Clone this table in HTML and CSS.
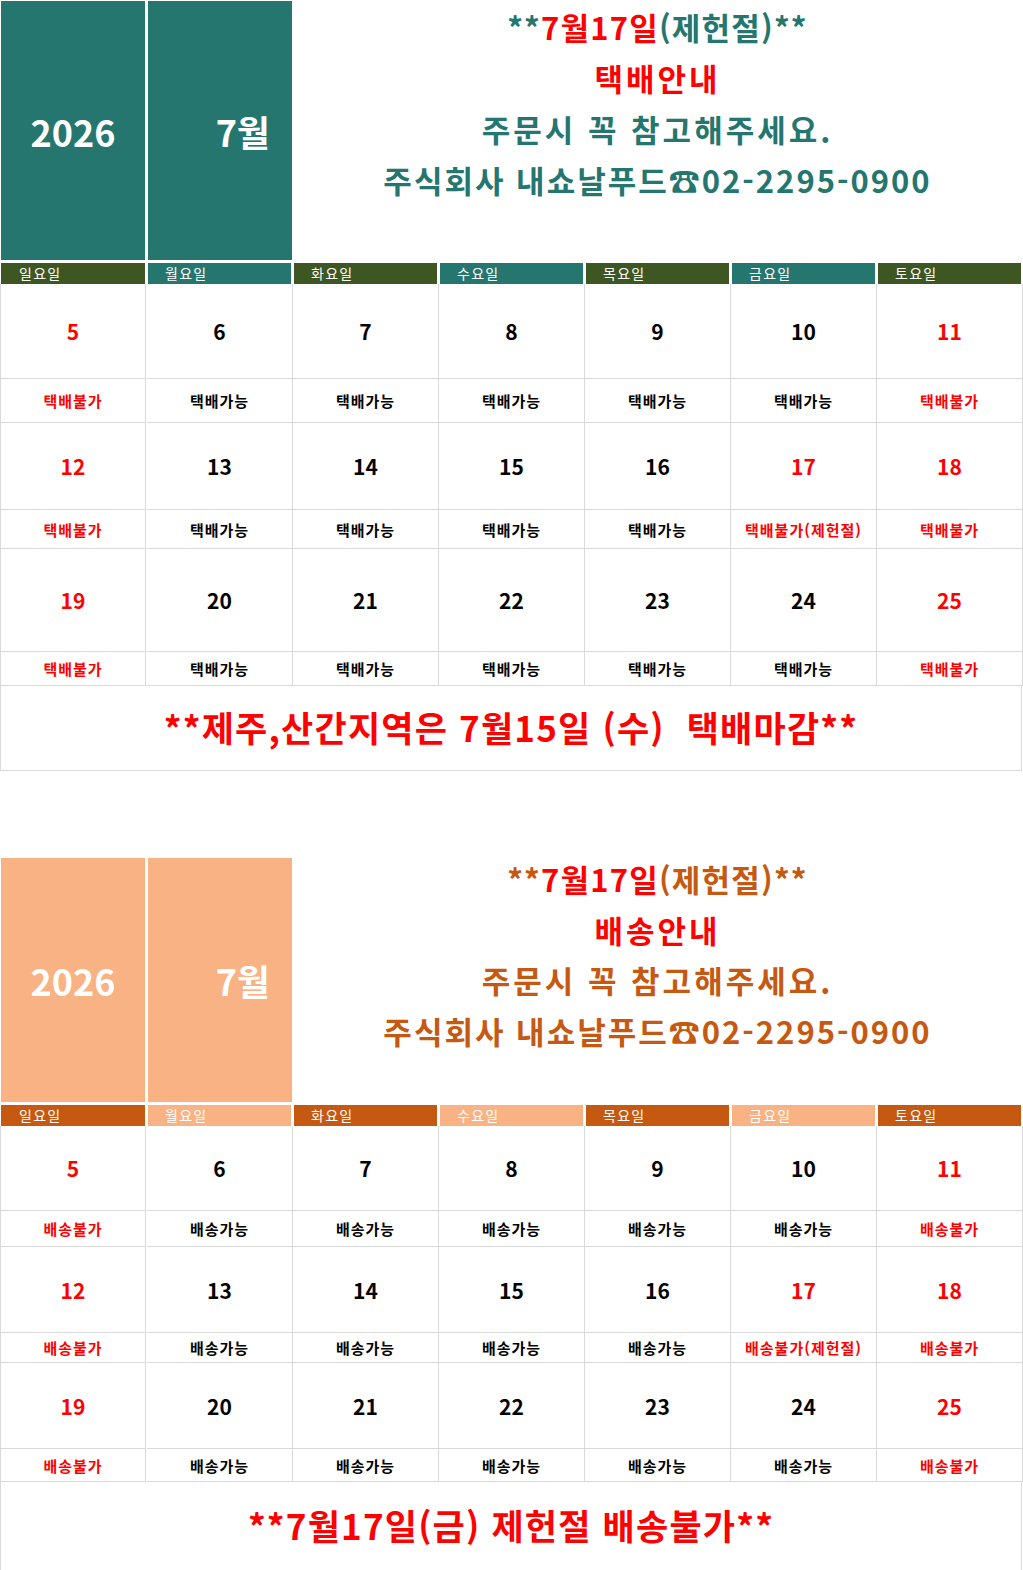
FILE: index.html
```html
<!DOCTYPE html>
<html lang="ko">
<head>
<meta charset="utf-8">
<title>7월 택배안내</title>
<link rel="stylesheet" href="styles.css">
</head>
<body>
<section class="cal cal-green">
  <div class="head">
    <div class="box year">2026</div>
    <div class="box month">7월</div>
    <div class="titles">
      <div class="tline t1">**<span class="red">7월17일</span>(제헌절)**</div>
      <div class="tline t2 red">택배안내</div>
      <div class="tline t3">주문시 꼭 참고해주세요.</div>
      <div class="tline t4">주식회사 내쇼날푸드☎02-2295-0900</div>
    </div>
  </div>
  <div class="dows">
    <div class="dow a">일요일</div><div class="dow b">월요일</div><div class="dow a">화요일</div><div class="dow b">수요일</div><div class="dow a">목요일</div><div class="dow b">금요일</div><div class="dow a">토요일</div>
  </div>
  <div class="grid">
    <div class="num red">5</div><div class="num">6</div><div class="num">7</div><div class="num">8</div><div class="num">9</div><div class="num">10</div><div class="num red">11</div>
    <div class="lab red">택배불가</div><div class="lab">택배가능</div><div class="lab">택배가능</div><div class="lab">택배가능</div><div class="lab">택배가능</div><div class="lab">택배가능</div><div class="lab red">택배불가</div>
    <div class="num red">12</div><div class="num">13</div><div class="num">14</div><div class="num">15</div><div class="num">16</div><div class="num red">17</div><div class="num red">18</div>
    <div class="lab red">택배불가</div><div class="lab">택배가능</div><div class="lab">택배가능</div><div class="lab">택배가능</div><div class="lab">택배가능</div><div class="lab red">택배불가(제헌절)</div><div class="lab red">택배불가</div>
    <div class="num red">19</div><div class="num">20</div><div class="num">21</div><div class="num">22</div><div class="num">23</div><div class="num">24</div><div class="num red">25</div>
    <div class="lab red">택배불가</div><div class="lab">택배가능</div><div class="lab">택배가능</div><div class="lab">택배가능</div><div class="lab">택배가능</div><div class="lab">택배가능</div><div class="lab red">택배불가</div>
  </div>
  <div class="notice">**제주,산간지역은 7월15일 (수)  택배마감**</div>
</section>

<section class="cal cal-orange">
  <div class="head">
    <div class="box year">2026</div>
    <div class="box month">7월</div>
    <div class="titles">
      <div class="tline t1">**<span class="red">7월17일</span>(제헌절)**</div>
      <div class="tline t2 red">배송안내</div>
      <div class="tline t3">주문시 꼭 참고해주세요.</div>
      <div class="tline t4">주식회사 내쇼날푸드☎02-2295-0900</div>
    </div>
  </div>
  <div class="dows">
    <div class="dow a">일요일</div><div class="dow b">월요일</div><div class="dow a">화요일</div><div class="dow b">수요일</div><div class="dow a">목요일</div><div class="dow b">금요일</div><div class="dow a">토요일</div>
  </div>
  <div class="grid">
    <div class="num red">5</div><div class="num">6</div><div class="num">7</div><div class="num">8</div><div class="num">9</div><div class="num">10</div><div class="num red">11</div>
    <div class="lab red">배송불가</div><div class="lab">배송가능</div><div class="lab">배송가능</div><div class="lab">배송가능</div><div class="lab">배송가능</div><div class="lab">배송가능</div><div class="lab red">배송불가</div>
    <div class="num red">12</div><div class="num">13</div><div class="num">14</div><div class="num">15</div><div class="num">16</div><div class="num red">17</div><div class="num red">18</div>
    <div class="lab red">배송불가</div><div class="lab">배송가능</div><div class="lab">배송가능</div><div class="lab">배송가능</div><div class="lab">배송가능</div><div class="lab red">배송불가(제헌절)</div><div class="lab red">배송불가</div>
    <div class="num red">19</div><div class="num">20</div><div class="num">21</div><div class="num">22</div><div class="num">23</div><div class="num">24</div><div class="num red">25</div>
    <div class="lab red">배송불가</div><div class="lab">배송가능</div><div class="lab">배송가능</div><div class="lab">배송가능</div><div class="lab">배송가능</div><div class="lab">배송가능</div><div class="lab red">배송불가</div>
  </div>
  <div class="notice">**7월17일(금) 제헌절 배송불가**</div>
</section>
</body>
</html>
```
FILE: styles.css
```css
* { box-sizing: border-box; }
html, body { margin: 0; padding: 0; background: #fff; }
body {
  font-family: "Noto Sans CJK KR", "Noto Sans", sans-serif;
  width: 1023px;
  overflow: hidden;
}
.red { color: #ff0000; }

.cal { width: 1023px; }
.cal-orange { margin-top: 87px; }

.head {
  display: grid;
  grid-template-columns: 146px 146px 1fr;
  padding-top: 1px;
}
.cal-green .head { height: 263px; }
.cal-orange .head { height: 247px; padding-top: 0; }

.box {
  color: #fff;
  font-weight: 700;
  font-size: 36px;
  display: flex;
  align-items: center;
  line-height: 1;
}
.cal-green .box { background: #25766f; height: 259px; }
.cal-orange .box { background: #f8b283; height: 244px; }
.year { margin: 0 1px 0 1px; justify-content: center; }
.month { margin: 0 0 0 2px; justify-content: flex-end; padding-right: 22px; }

.titles {
  display: flex;
  flex-direction: column;
  align-items: center;
  font-weight: 700;
  font-size: 31px;
  line-height: 51px;
  white-space: nowrap;
}
.t1 { letter-spacing: 1.2px; }
.t2 { letter-spacing: 3px; }
.t3 { letter-spacing: 3px; }
.t4 { letter-spacing: 2px; }
.cal-green .titles { color: #25766f; margin-top: 0; }
.cal-orange .titles { color: #c65911; margin-top: -4px; line-height: 50.6px; }
.titles .red { color: #ff0000; }

.dows {
  display: grid;
  grid-template-columns: repeat(7, 146px);
  height: 21px;
}
.dow {
  color: #fff;
  font-size: 14px;
  line-height: 20px;
  padding-left: 17px;
  margin: 0 1px 0 2px;
  letter-spacing: 1.3px;
}
.dow:first-child { margin-left: 1px; padding-left: 18px; }
.cal-green .dow.a { background: #3e5622; }
.cal-green .dow.b { background: #25766f; }
.cal-orange .dow.a { background: #c65911; }
.cal-orange .dow.b { background: #f8b283; }

.grid {
  display: grid;
  grid-template-columns: repeat(7, 146px);
  border-left: 1px solid #d9d9d9;
}
.cal-green .grid { grid-template-rows: 95px 44px 87px 39px 103px 34px; }
.cal-orange .grid { grid-template-rows: 85px 36px 86px 30px 86px 33px; }
.grid > div {
  border-right: 1px solid #d9d9d9;
  border-bottom: 1px solid #d9d9d9;
  display: flex;
  align-items: center;
  justify-content: center;
  white-space: nowrap;
}
.grid > div:nth-child(7n+1) { width: 145px; }
.num {
  font-weight: 700;
  font-size: 21px;
  color: #000;
}
.num.red { color: #ff0000; }
.lab {
  font-weight: 700;
  font-size: 15px;
  letter-spacing: 1px;
  color: #000;
}
.lab.red { color: #ff0000; }

.notice {
  border-left: 1px solid #d9d9d9;
  border-right: 1px solid #d9d9d9;
  border-bottom: 1px solid #d9d9d9;
  width: 1022px;
  display: flex;
  align-items: center;
  justify-content: center;
  color: #ff0000;
  font-weight: 700;
  font-size: 35px;
  letter-spacing: 1.2px;
  white-space: pre;
}
.cal-green .notice { height: 85px; padding-bottom: 3px; }
.cal-orange .notice { height: 90px; padding-bottom: 4px; }
```
